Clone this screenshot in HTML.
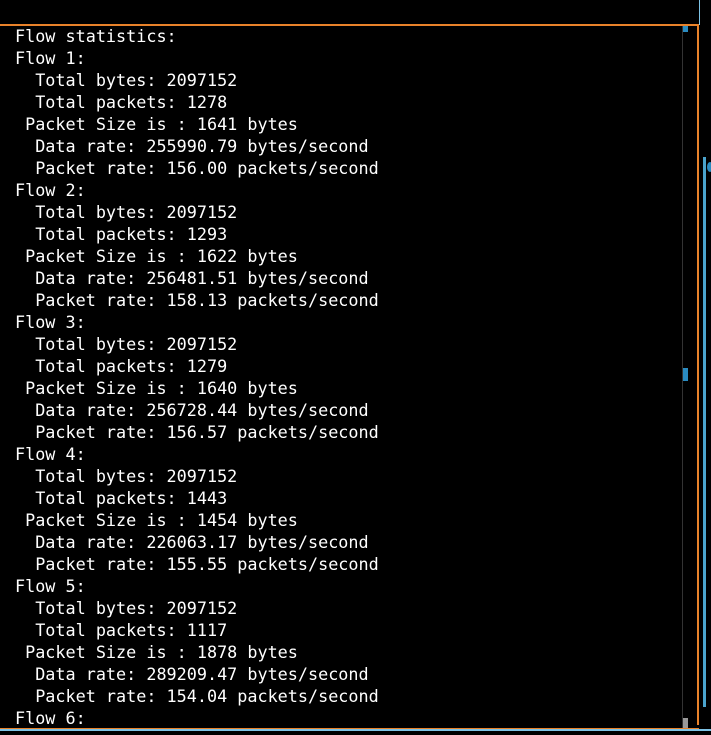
<!DOCTYPE html>
<html><head><style>
html,body{margin:0;padding:0;background:#000;width:711px;height:735px;overflow:hidden;position:relative}
pre{position:absolute;left:15px;top:25px;margin:0;font-family:"DejaVu Sans Mono","Liberation Mono",monospace;font-size:16.8px;line-height:22px;color:#fff}
.a{position:absolute}
</style></head><body>
<div class="a" style="left:0;top:24px;width:699px;height:2px;background:#e8822a"></div>
<div class="a" style="left:697px;top:24px;width:2px;height:701px;background:#e8822a"></div>
<div class="a" style="left:699px;top:0;width:1px;height:25px;background:#7ec3e6"></div>
<div class="a" style="left:0;top:728px;width:699px;height:1px;background:#e8822a"></div>
<div class="a" style="left:0;top:729px;width:711px;height:2px;background:#7ec3e6"></div>
<div class="a" style="left:682px;top:26px;width:1px;height:702px;background:#333"></div>
<div class="a" style="left:683px;top:26px;width:5px;height:6px;background:#2a8bc0"></div>
<div class="a" style="left:683px;top:368px;width:5px;height:13px;background:#2a8bc0"></div>
<div class="a" style="left:683px;top:718px;width:5px;height:10px;background:#999"></div>
<div class="a" style="left:703px;top:157px;width:3px;height:550px;background:#4aa3cc"></div>
<div class="a" style="left:707px;top:162px;width:6px;height:10px;border-radius:50%;background:#2a8bc0"></div>
<pre>Flow statistics:
Flow 1:
  Total bytes: 2097152
  Total packets: 1278
 Packet Size is : 1641 bytes
  Data rate: 255990.79 bytes/second
  Packet rate: 156.00 packets/second
Flow 2:
  Total bytes: 2097152
  Total packets: 1293
 Packet Size is : 1622 bytes
  Data rate: 256481.51 bytes/second
  Packet rate: 158.13 packets/second
Flow 3:
  Total bytes: 2097152
  Total packets: 1279
 Packet Size is : 1640 bytes
  Data rate: 256728.44 bytes/second
  Packet rate: 156.57 packets/second
Flow 4:
  Total bytes: 2097152
  Total packets: 1443
 Packet Size is : 1454 bytes
  Data rate: 226063.17 bytes/second
  Packet rate: 155.55 packets/second
Flow 5:
  Total bytes: 2097152
  Total packets: 1117
 Packet Size is : 1878 bytes
  Data rate: 289209.47 bytes/second
  Packet rate: 154.04 packets/second
Flow 6:</pre>
</body></html>
